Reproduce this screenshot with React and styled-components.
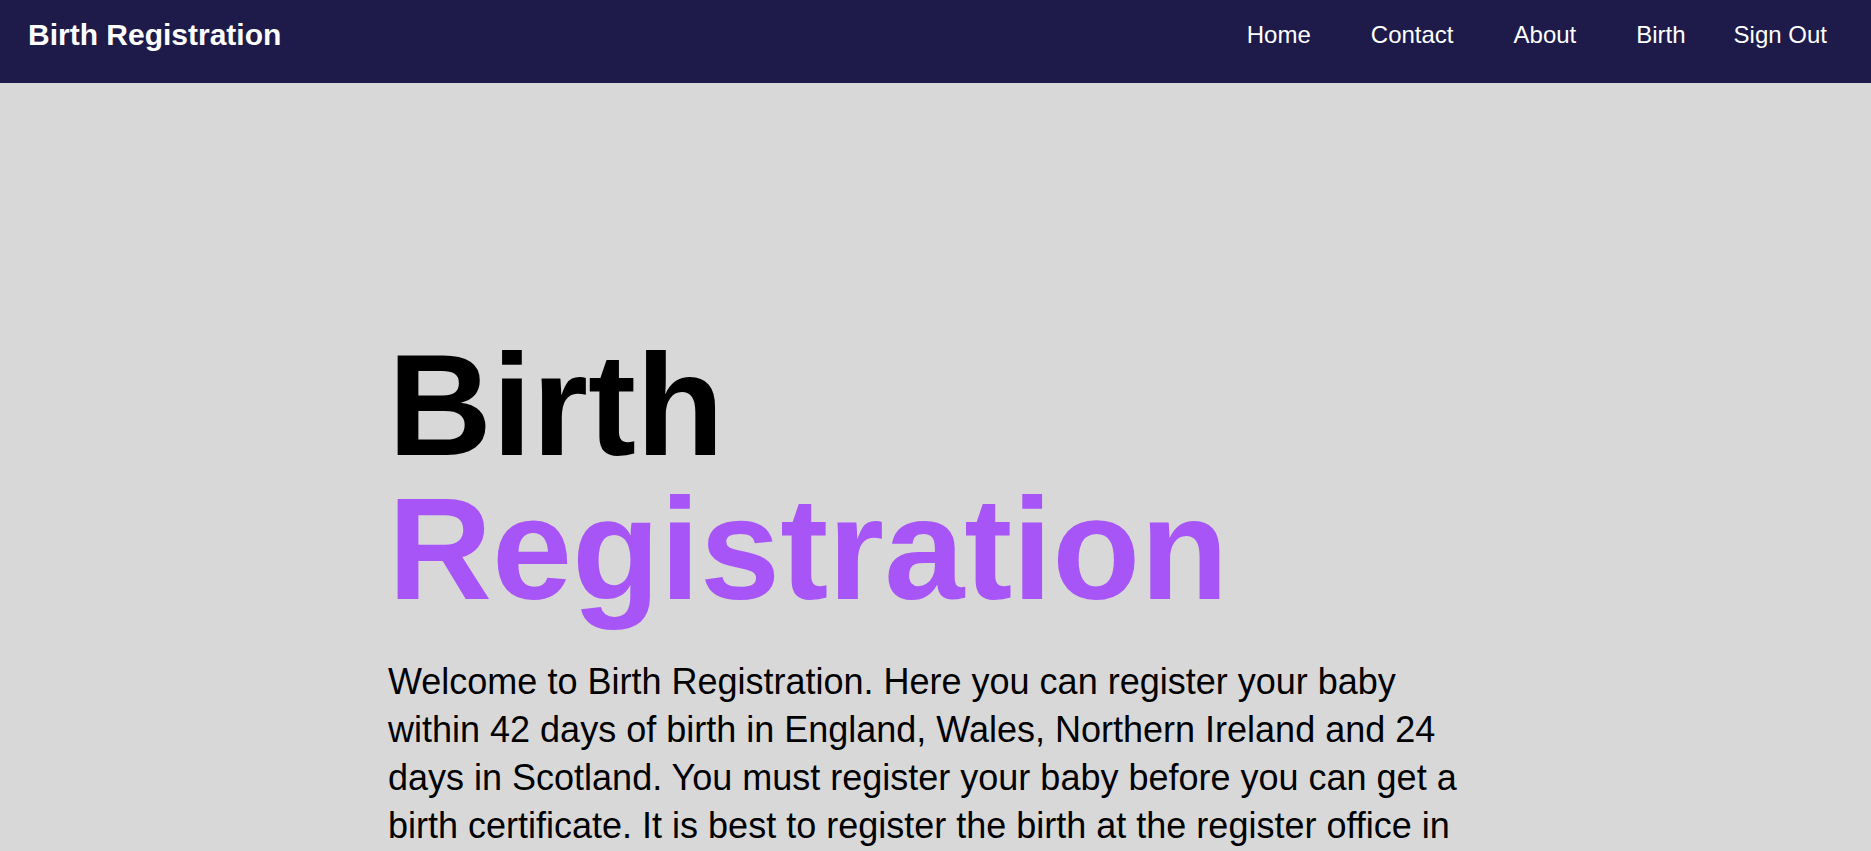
import React from "react";
import styled, { createGlobalStyle } from "styled-components";

const GlobalStyle = createGlobalStyle`
  html, body {
    margin: 0;
    padding: 0;
    background: #d8d8d8;
    font-family: "Liberation Sans", Arial, sans-serif;
  }
  * {
    box-sizing: border-box;
  }
`;

const Navbar = styled.header`
  height: 83px;
  background: #1e1b4b;
  color: #ffffff;
  display: flex;
  align-items: center;
  justify-content: space-between;
  padding: 0 44px 13px 28px;
`;

const Logo = styled.a`
  font-size: 30px;
  font-weight: 700;
  color: #ffffff;
  text-decoration: none;
`;

const NavList = styled.nav`
  display: flex;
  align-items: center;
`;

const NavLink = styled.a`
  font-size: 24px;
  color: #ffffff;
  text-decoration: none;
  margin-left: ${(p) => (p.$tight ? "48px" : "60px")};
  cursor: pointer;
  &:hover {
    color: #c4b5fd;
  }
`;

const Main = styled.main`
  background: #d8d8d8;
  padding: 251px 0 60px 388px;
`;

const Heading = styled.h1`
  margin: 0 0 36px;
  font-size: 144px;
  line-height: 1;
  font-weight: 700;
  color: #000000;
`;

const Accent = styled.span`
  display: block;
  color: #a855f7;
`;

const Intro = styled.p`
  margin: 0;
  max-width: 1090px;
  font-size: 36px;
  line-height: 48px;
  color: #000000;
`;

const links = ["Home", "Contact", "About", "Birth"];

export default function App() {
  return (
    <>
      <GlobalStyle />
      <Navbar>
        <Logo href="#">Birth Registration</Logo>
        <NavList>
          {links.map((l) => (
            <NavLink key={l} href="#">
              {l}
            </NavLink>
          ))}
          <NavLink $tight>Sign Out</NavLink>
        </NavList>
      </Navbar>
      <Main>
        <Heading>
          Birth
          <Accent>Registration</Accent>
        </Heading>
        <Intro>
          Welcome to Birth Registration. Here you can register your baby within
          42 days of birth in England, Wales, Northern Ireland and 24 days in
          Scotland. You must register your baby before you can get a birth
          certificate. It is best to register the birth at the register office in
          the area where the baby was born. You can use any register office if
          it is more convenient, but the details will be passed on to the
          office in the area where your baby was born.
        </Intro>
      </Main>
    </>
  );
}
